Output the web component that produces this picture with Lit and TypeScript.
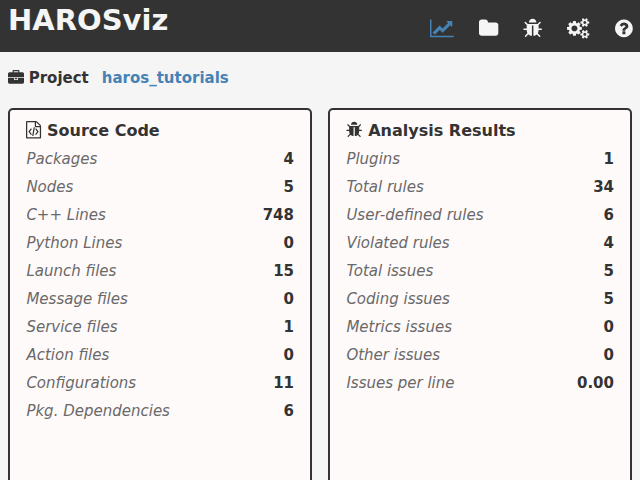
import { LitElement, html, css, svg } from "lit";
import { customElement, property } from "lit/decorators.js";

const smallGear = (y: number) =>
  `M1920 ${y}v140q0 16-149 31-12 27-30 52 51 113 51 138 0 4-4 7-122 71-124 71-8 0-46-47t-52-68q-20 2-30 2t-30-2q-14 21-52 68t-46 47q-2 0-124-71-4-3-4-7 0-25 51-138-18-25-30-52-149-15-149-31v-140q0-16 149-31 13-29 30-52-51-113-51-138 0-4 4-7 4-2 35-20t59-34 30-16q8 0 46 46.5t52 67.5q20-2 30-2t30 2q51-71 92-112l6-2q4 0 124 70 4 3 4 7 0 25-51 138 17 23 30 52 149 15 149 31z`;

// Each icon: left edge and width on a 1792-unit em, and its outline.
const ICONS: Record<string, [number, number, string]> = {
  chart: [0, 2048, "M2048 1536v128h-2048v-1536h128v1408h1920zm-128-1248v435q0 21-19.5 29.5t-35.5-7.5l-121-121-633 633q-10 10-23 10t-23-10l-233-233-416 416-192-192 585-585q10-10 23-10t23 10l233 233 464-464-121-121q-16-16-7.5-35.5t29.5-19.5h435q14 0 23 9t9 23z"],
  folder: [64, 1664, "M1728 608v704q0 92-66 158t-158 66h-1216q-92 0-158-66t-66-158v-960q0-92 66-158t158-66h320q92 0 158 66t66 158v32h672q92 0 158 66t66 158z"],
  bug: [64, 1664, "M1696 960q0 26-19 45t-45 19h-224q0 171-67 290l208 209q19 19 19 45t-19 45q-18 19-45 19t-45-19l-198-197q-5 5-15 13t-42 28.5-65 36.5-82 29-97 13v-896h-128v896q-51 0-101.5-13.5t-87-33-66-39-43.5-32.5l-15-14-183 207q-20 21-48 21-24 0-43-16-19-18-20.5-44.5t15.5-46.5l202-227q-58-114-58-274h-224q-26 0-45-19t-19-45 19-45 45-19h224v-294l-173-173q-19-19-19-45t19-45 45-19 45 19l173 173h844l173-173q19-19 45-19t45 19 19 45-19 45l-173 173v294h224q26 0 45 19t19 45zm-480-576h-640q0-133 93.5-226.5t226.5-93.5 226.5 93.5 93.5 226.5z"],
  cogs: [0, 1920, "M896 896q0-106-75-181t-181-75-181 75-75 181 75 181 181 75 181-75 75-181zm768 512q0-52-38-90t-90-38-90 38-38 90q0 53 37.5 90.5t90.5 37.5 90.5-37.5 37.5-90.5zm0-1024q0-52-38-90t-90-38-90 38-38 90q0 53 37.5 90.5t90.5 37.5 90.5-37.5 37.5-90.5zm-384 421v185q0 10-7 19.5t-16 10.5l-155 24q-11 35-32 76 34 48 90 115 7 11 7 20 0 12-7 19-23 30-82.5 89.5t-78.5 59.5q-11 0-21-7l-115-90q-37 19-77 31-11 108-23 155-7 24-30 24h-186q-11 0-20-7.5t-10-17.5l-23-153q-34-10-75-31l-118 89q-7 7-20 7-11 0-21-8-144-133-144-160 0-9 7-19 10-14 41-53t47-61q-23-44-35-82l-152-24q-10-1-17-9.5t-7-19.5v-185q0-10 7-19.5t16-10.5l155-24q11-35 32-76-34-48-90-115-7-11-7-20 0-12 7-20 22-30 82-89t79-59q11 0 21 7l115 90q34-18 77-32 11-108 23-154 7-24 30-24h186q11 0 20 7.5t10 17.5l23 153q34 10 75 31l118-89q8-7 20-7 11 0 21 8 144 133 144 160 0 8-7 19-12 16-42 54t-45 60q23 48 34 82l152 23q10 2 17 10.5t7 19.5z" + smallGear(1338) + smallGear(314)],
  help: [128, 1536, "M1024 1376v-192q0-14-9-23t-23-9h-192q-14 0-23 9t-9 23v192q0 14 9 23t23 9h192q14 0 23-9t9-23zm256-672q0-88-55.5-163t-138.5-116-170-41q-243 0-371 213-15 24 8 42l132 100q7 6 19 6 16 0 25-12 53-68 86-92 34-24 86-24 48 0 85.5 26t37.5 59q0 38-20 61t-68 45q-63 28-115.5 86.5t-52.5 125.5v36q0 14 9 23t23 9h192q14 0 23-9t9-23q0-19 21.5-49.5t54.5-49.5q32-18 49-28.5t46-35 44.5-48 28-60.5 12.5-81zm384 192q0 209-103 385.5t-279.5 279.5-385.5 103-385.5-103-279.5-279.5-103-385.5 103-385.5 279.5-279.5 385.5-103 385.5 103 279.5 279.5 103 385.5z"],
  briefcase: [0, 1792, "M640 256h512v-128h-512v128zm1152 640v480q0 66-47 113t-113 47h-1472q-66 0-113-47t-47-113v-480h672v160q0 26 19 45t45 19h320q26 0 45-19t19-45v-160h672zm-768 0v128h-256v-128h256zm768-480v384h-1792v-384q0-66 47-113t113-47h352v-160q0-40 28-68t68-28h576q40 0 68 28t28 68v160h352q66 0 113 47t47 113z"],
  code: [128, 1536, "M1596 380q28 28 48 76t20 88v1152q0 40-28 68t-68 28h-1344q-40 0-68-28t-28-68v-1600q0-40 28-68t68-28h896q40 0 88 20t76 48zm-444-244v376h376q-10-29-22-41l-313-313q-12-12-41-22zm384 1528v-1024h-416q-40 0-68-28t-28-68v-416h-768v1536h1280zm-928-896q8-11 21-12.5t24 6.5l51 38q11 8 12.5 21t-6.5 24l-182 243 182 243q8 11 6.5 24t-12.5 21l-51 38q-11 8-24 6.5t-21-12.5l-226-301q-14-19 0-38zm802 301q14 19 0 38l-226 301q-8 11-21 12.5t-24-6.5l-51-38q-11-8-12.5-21t6.5-24l182-243-182-243q-8-11-6.5-24t12.5-21l51-38q11-8 24-6.5t21 12.5zm-620 461q-13-2-20.5-13t-5.5-24l138-831q2-13 13-20.5t24-5.5l63 10q13 2 20.5 13t5.5 24l-138 831q-2 13-13 20.5t-24 5.5z"],
};

@customElement("viz-icon")
class VizIcon extends LitElement {
  @property() name = "bug";
  static styles = css`
    :host { display: block; height: 1em; flex: none; }
    .glyph { display: block; height: 1em; width: auto; fill: currentColor; overflow: visible; }
  `;
  render() {
    const [x, w, d] = ICONS[this.name];
    return html`<svg class="glyph" viewBox="${x} 0 ${w} 1792">${svg`<path d=${d}></path>`}</svg>`;
  }
}

@customElement("stat-panel")
class StatPanel extends LitElement {
  @property() icon = "bug";
  @property() heading = "";
  @property({ attribute: false }) rows: [string, string][] = [];
  static styles = css`
    :host {
      display: block; flex: 1; box-sizing: border-box;
      border: 2px solid #333; border-radius: 5px;
      background: snow; padding: 7px 16px;
    }
    .heading { display: flex; align-items: center; height: 26px; margin-bottom: 2px; font-size: 16px; font-weight: bold; white-space: nowrap; }
    .icon { font-size: 17.6px; margin: 0 5.9px 1px 0; }
    .row { display: flex; justify-content: space-between; align-items: center; height: 28px; font-size: 15px; }
    .label { font-style: italic; color: #696969; margin-left: 0.4px; }
    .value { font-weight: bold; }
  `;
  render() {
    return html`
      <div class="heading"><viz-icon class="icon" name=${this.icon}></viz-icon>${this.heading}</div>
      ${this.rows.map(([label, value]) => html`
        <div class="row"><span class="label">${label}</span><span class="value">${value}</span></div>`)}
    `;
  }
}

const SOURCE: [string, string][] = [
  ["Packages", "4"], ["Nodes", "5"], ["C++ Lines", "748"], ["Python Lines", "0"],
  ["Launch files", "15"], ["Message files", "0"], ["Service files", "1"],
  ["Action files", "0"], ["Configurations", "11"], ["Pkg. Dependencies", "6"],
];
const ANALYSIS: [string, string][] = [
  ["Plugins", "1"], ["Total rules", "34"], ["User-defined rules", "6"],
  ["Violated rules", "4"], ["Total issues", "5"], ["Coding issues", "5"],
  ["Metrics issues", "0"], ["Other issues", "0"], ["Issues per line", "0.00"],
];

@customElement("app-root")
class AppRoot extends LitElement {
  static styles = css`
    :host {
      display: flex; flex-direction: column; width: 640px; height: 480px;
      overflow: hidden; box-sizing: border-box; background: whitesmoke; color: #333;
      font-family: "DejaVu Sans", sans-serif;
    }
    .header {
      display: flex; justify-content: space-between; height: 52px; flex: none;
      box-sizing: border-box; padding: 0 7.5px 0 8px; background: #333; color: whitesmoke;
    }
    .title { margin: 0; font-size: 29px; line-height: 40px; font-weight: bold; }
    .nav { display: flex; gap: 25px; padding-top: 17.5px; font-size: 20.8px; }
    .active { color: steelblue; }
    .project { display: flex; align-items: center; height: 52px; flex: none; padding: 0 8px; font-size: 15px; font-weight: bold; }
    .case { font-size: 16px; margin: 0 4.7px 1px 0; }
    .name { color: steelblue; margin-left: 13px; }
    .panels { display: flex; gap: 16px; height: 440px; flex: none; margin-top: 4px; padding: 0 8px; }
  `;
  render() {
    return html`
      <header class="header">
        <h1 class="title">HAROSviz</h1>
        <nav class="nav">
          <viz-icon class="active" name="chart"></viz-icon>
          <viz-icon name="folder"></viz-icon>
          <viz-icon name="bug"></viz-icon>
          <viz-icon name="cogs"></viz-icon>
          <viz-icon name="help"></viz-icon>
        </nav>
      </header>
      <div class="project">
        <viz-icon class="case" name="briefcase"></viz-icon>
        <span>Project</span><span class="name">haros_tutorials</span>
      </div>
      <main class="panels">
        <stat-panel icon="code" heading="Source Code" .rows=${SOURCE}></stat-panel>
        <stat-panel icon="bug" heading="Analysis Results" .rows=${ANALYSIS}></stat-panel>
      </main>
    `;
  }
}
